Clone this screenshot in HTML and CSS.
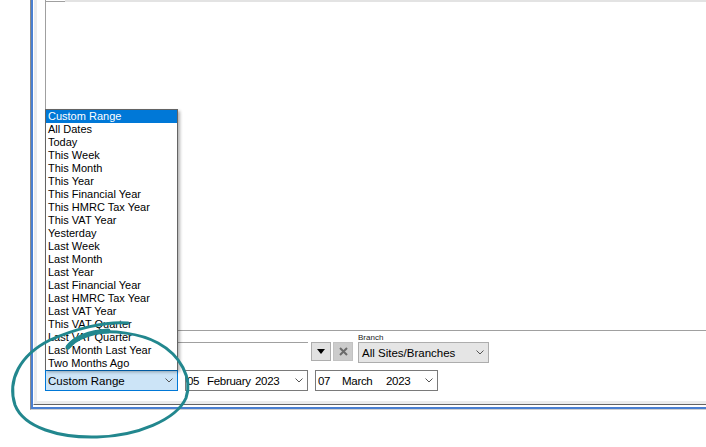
FILE: index.html
```html
<!DOCTYPE html>
<html lang="en">
<head>
<meta charset="utf-8">
<title>Date range filter</title>
<link rel="stylesheet" href="styles.css">
</head>
<body>
<div class="window">
  <div class="frame">
    <div class="client">
      <div class="panel">
        <div class="grid">
          <div class="grid-head"><div class="corner"></div><div class="cols"></div></div>
        </div>
        <div class="filters">
          <div class="row row-top">
            <div class="search"></div>
            <button type="button" class="btn btn-drop"><svg width="8" height="5" viewBox="0 0 8 5"><polygon points="0,0 8,0 4,5" fill="#000"/></svg></button>
            <button type="button" class="btn btn-clear"><svg width="9" height="9" viewBox="0 0 9 9"><path d="M1 1 L8 8 M8 1 L1 8" stroke="#6b6b6b" stroke-width="2" fill="none"/></svg></button>
            <div class="branch">
              <div class="branch-label">Branch</div>
              <div class="combo combo-branch"><span>All Sites/Branches</span><svg class="chev" width="8" height="5" viewBox="0 0 8 5"><polyline points="0.5,0.5 4,4 7.5,0.5" fill="none" stroke="#555" stroke-width="1"/></svg></div>
            </div>
          </div>
          <div class="row row-bottom">
            <div class="range">
              <ul class="range-list">
                <li class="selected">Custom Range</li>
                <li>All Dates</li>
                <li>Today</li>
                <li>This Week</li>
                <li>This Month</li>
                <li>This Year</li>
                <li>This Financial Year</li>
                <li>This HMRC Tax Year</li>
                <li>This VAT Year</li>
                <li>Yesterday</li>
                <li>Last Week</li>
                <li>Last Month</li>
                <li>Last Year</li>
                <li>Last Financial Year</li>
                <li>Last HMRC Tax Year</li>
                <li>Last VAT Year</li>
                <li>This VAT Quarter</li>
                <li>Last VAT Quarter</li>
                <li>Last Month Last Year</li>
                <li>Two Months Ago</li>
              </ul>
              <div class="combo combo-range"><span>Custom Range</span><svg class="chev" width="8" height="5" viewBox="0 0 8 5"><polyline points="0.5,0.5 4,4 7.5,0.5" fill="none" stroke="#555" stroke-width="1"/></svg></div>
            </div>
            <div class="date date-from"><span class="day">05</span><span class="month">February</span><span>2023</span><svg class="chev" width="8" height="5" viewBox="0 0 8 5"><polyline points="0.5,0.5 4,4 7.5,0.5" fill="none" stroke="#555" stroke-width="1"/></svg></div>
            <div class="date date-to"><span class="day">07</span><span class="month">March</span><span>2023</span><svg class="chev" width="8" height="5" viewBox="0 0 8 5"><polyline points="0.5,0.5 4,4 7.5,0.5" fill="none" stroke="#555" stroke-width="1"/></svg></div>
          </div>
        </div>
      </div>
    </div>
  </div>
</div>
<svg class="annot" width="706" height="447" viewBox="0 0 706 447">
  <path d="M128 323 C105 321 75 329 50 340 C20 355 7 380 15 405 C24 428 60 438 97 437 C137 436 176 420 186 398 C193 378 180 355 158 343 C140 333 112 330 92 333" fill="none" stroke="#22878e" stroke-width="3" stroke-linecap="round"/>
  <path d="M108 331 C92 332 76 337 68 347" fill="none" stroke="#22878e" stroke-width="5" stroke-linecap="round"/>
</svg>
</body>
</html>
```
FILE: styles.css
```css
* { box-sizing: border-box; }
html, body { margin: 0; }
body {
  width: 706px;
  height: 447px;
  overflow: hidden;
  background: #fff;
  padding-left: 30px;
  position: relative;
  font-family: "Liberation Sans", Arial, sans-serif;
  font-size: 11px;
  color: #000;
}
.window {
  height: 410px;
  border-left: 1px solid #8c8c8c;
  border-bottom: 1px solid #cfcfcf;
}
.frame {
  height: 100%;
  border-left: 2px solid #4a7fd0;
  border-bottom: 2px solid #4a7fd0;
  padding-bottom: 2px;
  background: #fff;
}
.client {
  height: 100%;
  border-left: 1px solid #fff;
  border-bottom: 1px solid #646464;
  padding: 0 0 3px 3px;
  background: #ececec;
}
.panel {
  height: 100%;
  background: #fff;
  padding-left: 8px;
}
.grid {
  height: 331px;
  border-left: 1px solid #a0a0a0;
  border-bottom: 1px solid #a0a0a0;
}
.grid-head { display: flex; height: 2px; }
.corner { width: 19px; border-bottom: 1px solid #a0a0a0; }
.cols { flex: 1; background: #e3e3e3; }

.row { display: flex; }
.row-top { height: 32px; align-items: flex-end; }
.search {
  width: 263px;
  height: 21px;
  border-top: 1px solid #a0a0a0;
}
.btn {
  margin: 0 0 2px 0;
  padding: 0;
  width: 20px;
  height: 19px;
  border: 1px solid #adadad;
  background: #e1e1e1;
  display: flex;
  align-items: center;
  justify-content: center;
}
.btn-drop { margin-left: 3px; }
.btn-clear { margin-left: 2px; background: #cccccc; border-color: #c2c2c2; }
.branch { margin-left: 5px; width: 131px; display: flex; flex-direction: column; }
.branch-label {
  height: 11px;
  font-size: 8px;
  line-height: 11px;
  color: #222;
  padding-top: 1px;
}
.combo {
  height: 21px;
  display: flex;
  align-items: center;
  border: 1px solid #adadad;
  white-space: nowrap;
  font-size: 11.5px;
}
.chev { margin-left: auto; margin-right: 4px; flex: none; }
.combo-branch { background: #e5e5e5; padding-left: 3px; }

.row-bottom { margin-top: 7px; height: 21px; }
.range { position: relative; width: 133px; }
.combo-range {
  background: #cce4f7;
  border-color: #0078d7;
  padding-left: 2px;
}
.range-list {
  position: absolute;
  left: 0;
  bottom: 100%;
  width: 133px;
  margin: 0;
  padding: 0;
  list-style: none;
  background: #fff;
  border: 1px solid #646464;
  border-bottom: none;
  box-shadow: 2px 2px 3px rgba(0, 0, 0, 0.3);
}
.range-list li {
  height: 13px;
  line-height: 13px;
  padding-left: 2px;
  white-space: nowrap;
}
.range-list li.selected { background: #0078d7; color: #fff; }

.date {
  width: 123px;
  height: 21px;
  margin-left: 7px;
  display: flex;
  align-items: center;
  border: 1px solid #7a7a7a;
  background: #fff;
  font-size: 11.5px;
  letter-spacing: -0.3px;
  white-space: nowrap;
}
.date-from { padding-left: 1px; }
.date-from .day { width: 20px; }
.date-from .month { width: 48px; }
.date-to { padding-left: 2px; }
.date-to .day { width: 24px; }
.date-to .month { width: 44px; }

.annot { position: absolute; left: 0; top: 0; pointer-events: none; }
```
